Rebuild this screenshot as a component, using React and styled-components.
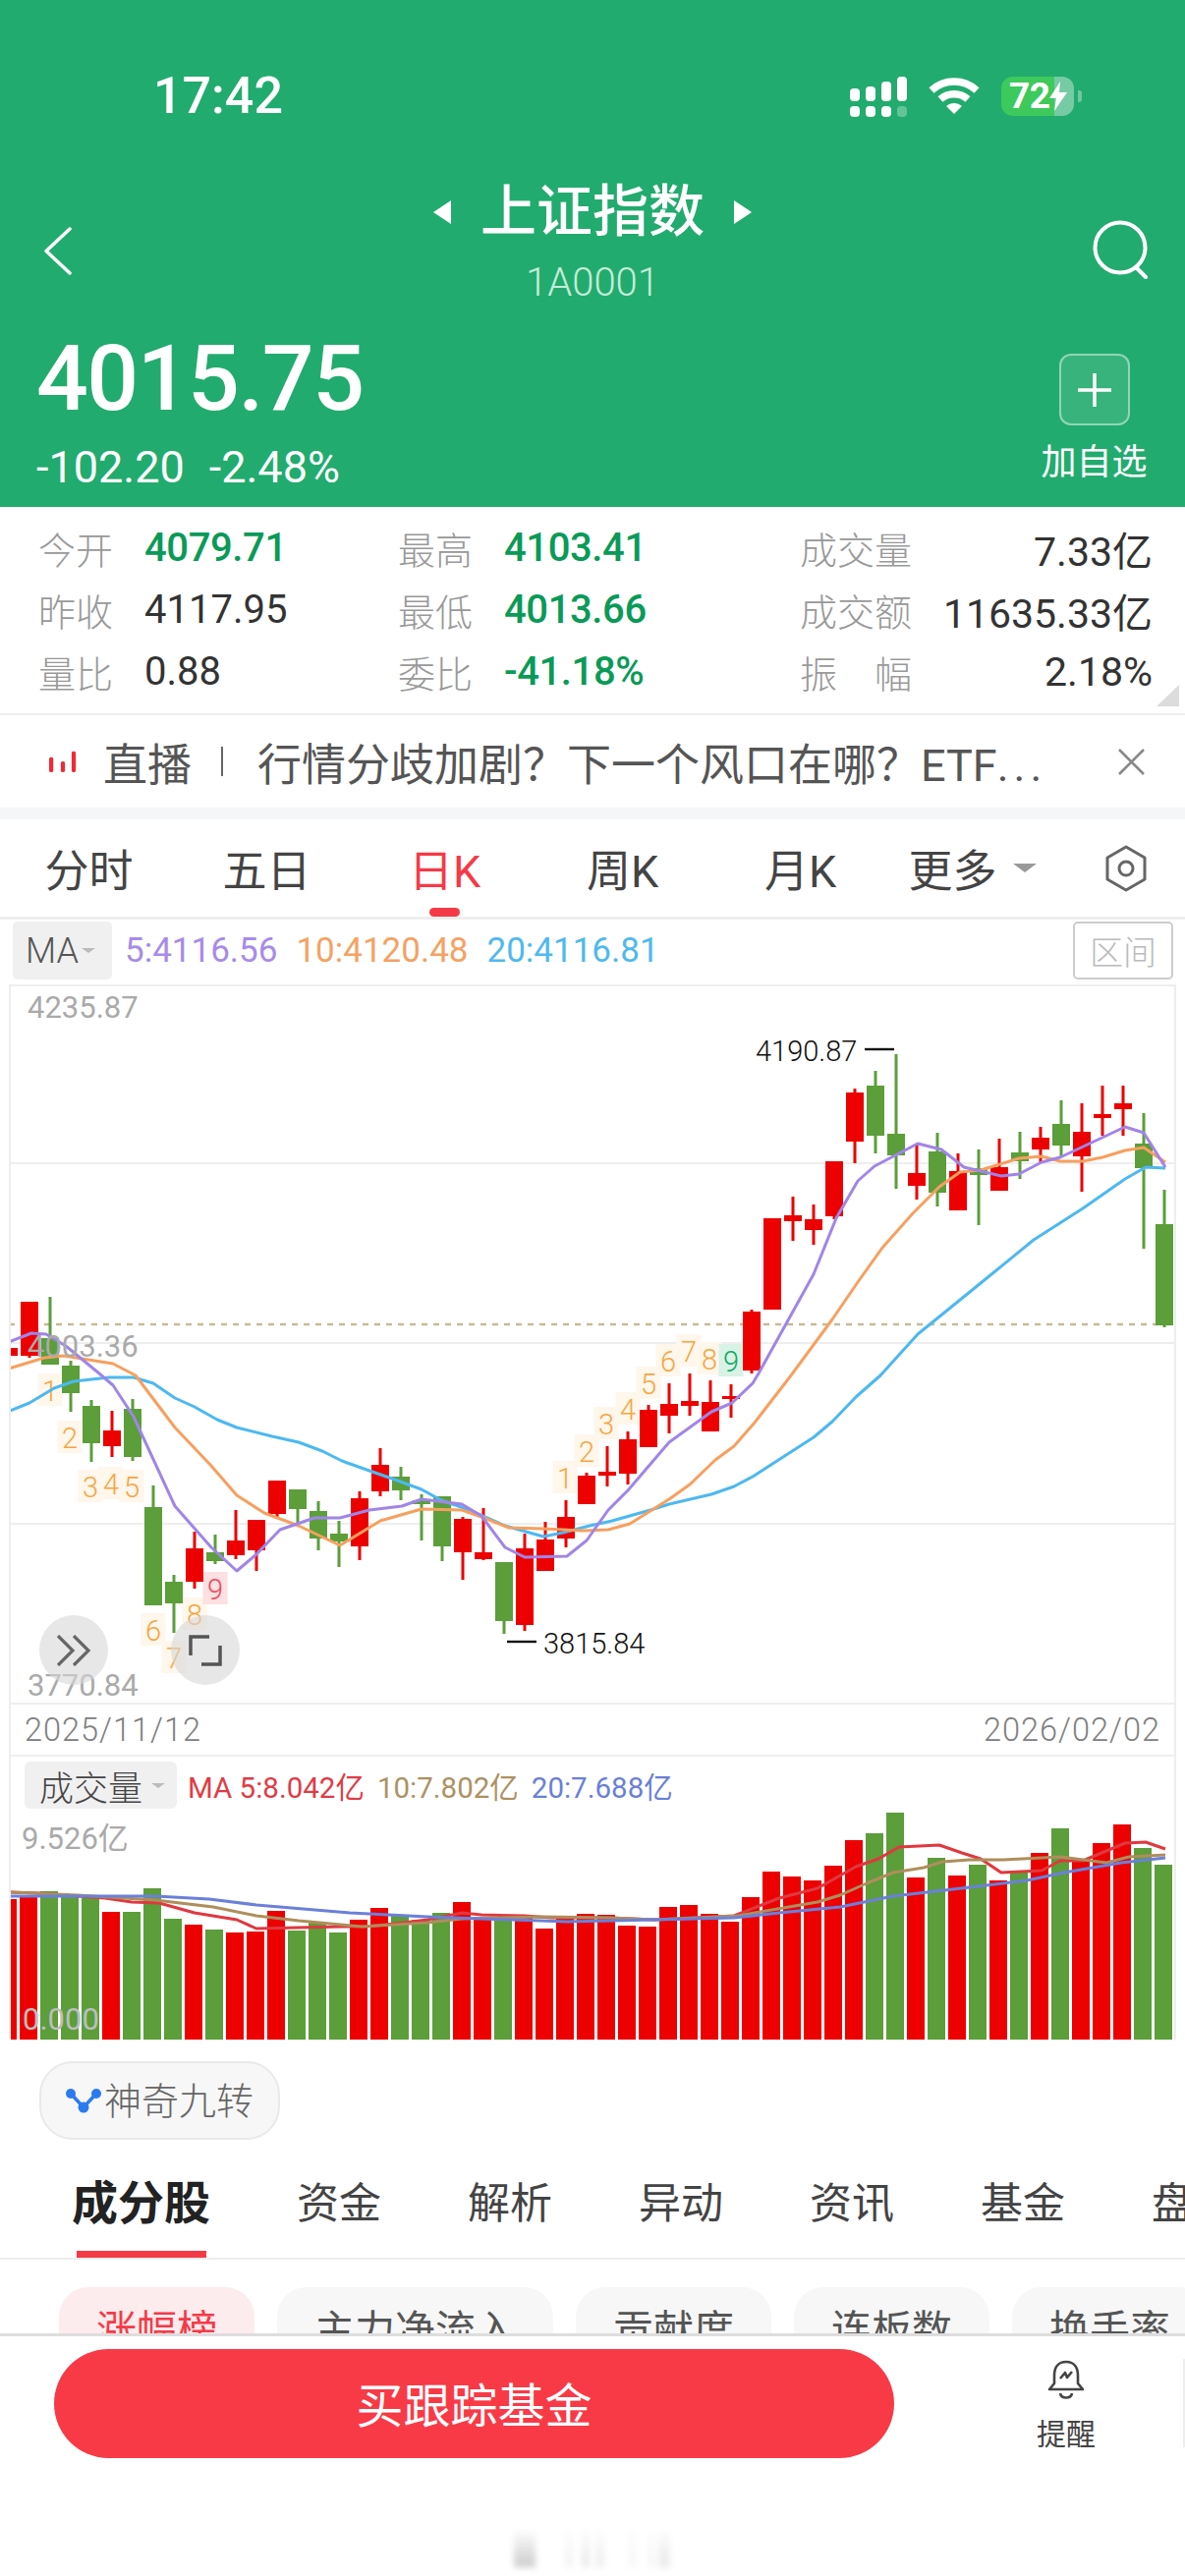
import React from 'react';
import styled, { createGlobalStyle } from 'styled-components';

const FONT = `Roboto, "Noto Sans CJK SC", sans-serif`;

const Global = createGlobalStyle`
  html, body { margin: 0; padding: 0; background: #fff; }
  * { box-sizing: border-box; }
`;

const Page = styled.div`
  width: 1206px; height: 2622px; display: flex; flex-direction: column; overflow: hidden;
  background: #fff; font-family: ${FONT}; color: #333; position: relative;
`;
const Main = styled.div`flex: 1; min-height: 0; overflow: hidden;`;

/* header */
const Header = styled.header`height: 516px; background: #22ab6e; color: #fff;`;
const StatusBar = styled.div`
  height: 130px; padding: 66px 113px 0 156px; display: flex; justify-content: space-between; align-items: center;
`;
const Clock = styled.div`font-size: 52px; font-weight: 500; line-height: 64px;`;
const StatusIcons = styled.div`display: flex; align-items: center; gap: 22px;`;
const Battery = styled.div`
  width: 74px; height: 40px; border-radius: 12px; display: flex; align-items: center; padding-left: 8px;
  background: linear-gradient(90deg, #3ec95c 0 54px, rgba(255,255,255,.38) 54px);
  font-size: 37px; font-weight: 700; letter-spacing: -.5px; position: relative; line-height: 40px;
  &::after { content: ''; position: absolute; right: -8px; top: 14px; width: 4px; height: 12px; border-radius: 0 3px 3px 0; background: rgba(255,255,255,.35); }
`;
const TitleRow = styled.div`
  height: 186px; padding: 50px 36px 0 36px; display: grid; grid-template-columns: 1fr auto 1fr;
`;
const BackIcon = styled.svg`margin: 51px 0 0 9px; display: block;`;
const SearchIcon = styled.svg`margin-top: 44px; display: block; justify-self: end;`;
const TitleBlock = styled.div`display: flex; flex-direction: column; align-items: center;`;
const TitleLine = styled.div`display: flex; align-items: center; gap: 30px; height: 72px;`;
const TitleText = styled.div`font-size: 57px; font-weight: 500; line-height: 72px;`;
const Tri = styled.span`
  width: 0; height: 0; border-style: solid; border-color: transparent;
  border-width: 12px ${p => p.$r ? 0 : '18px'} 12px ${p => p.$r ? '18px' : 0};
  ${p => p.$r ? 'border-left-color: #fff;' : 'border-right-color: #fff;'}
`;
const Code = styled.div`font-size: 40px; line-height: 40px; margin-top: 16px; color: #c6ecda; font-weight: 300;`;
const QuoteRow = styled.div`height: 200px; padding: 30px 39px 0 37px; display: flex; justify-content: space-between;`;
const Price = styled.div`font-size: 93px; font-weight: 500; line-height: 80px; letter-spacing: -1.5px;`;
const Change = styled.div`font-size: 45px; line-height: 50px; margin-top: 25px; display: flex; gap: 25px;`;
const AddColumn = styled.div`width: 107px; display: flex; flex-direction: column; align-items: center; padding-top: 14px;`;
const AddBtn = styled.div`
  width: 72px; height: 73px; border-radius: 12px; border: 2px solid rgba(255,255,255,.45); background: rgba(255,255,255,.1);
  display: flex; align-items: center; justify-content: center;
`;
const AddLabel = styled.div`font-size: 36px; line-height: 40px; margin-top: 18px; white-space: nowrap;`;

/* stats */
const Stats = styled.section`
  height: 212px; padding-top: 10px; border-bottom: 2px solid #eee; position: relative;
`;
const StatRow = styled.div`
  height: 63px; padding: 0 33px 0 39px; display: grid; align-items: center;
  grid-template-columns: 108px 258px 108px 301px 113px 1fr;
`;
const StatLabel = styled.div`font-size: 38px; color: #999; white-space: nowrap; font-weight: 300;`;
const StatValue = styled.div`
  font-size: ${p => p.$right ? 41 : 40}px; white-space: nowrap; font-weight: ${p => p.$green ? 500 : 400}; letter-spacing: ${p => p.$green ? '-.4px' : '0'};
  color: ${p => p.$green ? '#0a9a58' : '#333'}; text-align: ${p => p.$right ? 'right' : 'left'};
`;
const Corner = styled.div`
  position: absolute; right: 6px; bottom: 7px; width: 0; height: 0;
  border-left: 23px solid transparent; border-bottom: 22px solid #dcdcdc;
`;

/* live banner */
const Banner = styled.div`height: 94px; padding: 0 41px 0 50px; display: flex; align-items: center; color: #555; font-size: 45px; white-space: nowrap;`;
const BannerTag = styled.span`flex: none; margin-left: 27px;`;
const BannerSep = styled.span`flex: none; width: 2px; height: 30px; background: #666; margin: 0 35px 0 30px;`;
const BannerText = styled.span`flex: none; width: 826px; white-space: nowrap;`;
const BannerDots = styled.span`letter-spacing: 5px;`;
const CloseIcon = styled.svg`flex: none; margin-left: 50px; display: block;`;
const Band = styled.div`height: 12px; background: #f5f6f8;`;

/* period tabs */
const PeriodTabs = styled.nav`
  height: 102px; border-bottom: 3px solid #eee; display: grid; grid-template-columns: repeat(6, 181px) 1fr; align-items: center;
`;
const PeriodTab = styled.div`
  height: 99px; display: flex; align-items: center; justify-content: center; gap: 16px; font-size: 45px; position: relative;
  color: ${p => p.$active ? '#f53a47' : '#444'};
  ${p => p.$more && 'padding-right: 12px;'}
  ${p => p.$active && `&::after { content: ''; position: absolute; left: 75px; bottom: 0; width: 31px; height: 9px; border-radius: 5px; background: #f53a47; }`}
`;
const Caret = styled.span`
  width: 0; height: 0; border-style: solid; border-color: ${p => p.$c || '#999'} transparent transparent transparent;
  border-width: ${p => p.$s * .8}px ${p => p.$s}px 0 ${p => p.$s}px;
`;
const SettingIcon = styled.svg`display: block; margin-left: 38px;`;

/* MA row */
const MaRow = styled.div`height: 66px; padding: 2px 12px 0 13px; display: flex; align-items: flex-start;`;
const MaBtn = styled.div`
  width: 101px; height: 59px; border-radius: 5px; background: #f0f0f0; font-size: 36px; color: #555; font-weight: 300;
  display: flex; align-items: center; padding-left: 13px; gap: 3px;
`;
const MaValues = styled.div`height: 59px; flex: 1; display: flex; align-items: center; gap: 19px; margin-left: 13px; font-size: 35px;`;
const MaVal = styled.span`color: ${p => p.$c};`;
const RangeBtn = styled.div`
  width: 102px; height: 59px; border: 2px solid #ccc; border-radius: 5px; color: #bbb; font-size: 34px; font-weight: 300;
  display: flex; align-items: center; justify-content: center;
`;

/* chart frame */
const Frame = styled.div`margin: 0 9px; border: 2px solid #eee; border-bottom: 0; width: 1188px;`;
const PriceArea = styled.div`position: relative; height: 729px;`;
const ChartSvg = styled.svg`
  display: block;
  text { font-family: ${FONT}; }
`;
const CircleBtn = styled.div`
  position: absolute; top: 640px; left: ${p => p.$left}px; width: 70px; height: 71px; border-radius: 50%;
  background: rgba(215,215,215,.6); display: flex; align-items: center; justify-content: center;
`;
const DateRow = styled.div`
  height: 55px; border-top: 2px solid #eee; border-bottom: 2px solid #eee; padding: 0 14px 0 14px; display: flex; align-items: center; justify-content: space-between;
  font-size: 32.5px; letter-spacing: 1px; color: #808080; font-weight: 300;
`;
const VolHead = styled.div`height: 53px; padding: 5px 0 0 14px; display: flex; align-items: flex-start;`;
const VolBtn = styled.div`
  width: 155px; height: 48px; border-radius: 6px; background: #f0f0f0; font-size: 35px; color: #444;
  display: flex; align-items: center; padding-left: 15px; gap: 9px; font-weight: 300;
`;
const VolMa = styled.div`height: 48px; display: flex; align-items: center; gap: 13px; margin-left: 11px; font-size: 29.5px;`;

/* indicator pill */
const PillRow = styled.div`padding: 22px 0 0 40px;`;
const Pill = styled.div`
  width: 245px; height: 80px; border-radius: 34px; background: #f7f7f7; border: 2px solid #e9e9e9;
  display: flex; align-items: center; padding: 0 0 5px 25px; gap: 3px; font-size: 38px; color: #666; font-weight: 300;
`;
const PillIcon = styled.svg`display: block; margin-top: 5px; flex: none;`;
const SectionTabs = styled.nav`
  height: 122px; padding: 10px 0 0 73px; border-bottom: 2px solid #eee; display: flex; align-items: center; gap: 88px; overflow: hidden; white-space: nowrap;
`;
const SectionTab = styled.div`
  font-size: ${p => p.$active ? 47 : 43}px; font-weight: ${p => p.$active ? 700 : 400}; color: ${p => p.$active ? '#222' : '#444'};
  position: relative; flex: none; line-height: 60px;
  ${p => p.$active && `&::after { content: ''; position: absolute; left: 5px; right: 4px; top: 78px; height: 8px; background: #f53a47; }`}
`;
const ChipRow = styled.div`padding: 28px 0 0 60px; display: flex; gap: 23px; white-space: nowrap;`;
const Chip = styled.div`
  flex: none; height: 80px; padding: 0 38px; border-radius: 30px; font-size: 41px; display: flex; align-items: center;
  background: ${p => p.$active ? '#fdecee' : '#f7f7f7'}; color: ${p => p.$active ? '#f53a47' : '#555'};
`;

/* footer */
const Footer = styled.footer`
  flex: none; height: 247px; border-top: 3px solid #ddd; background: #fff; padding: 13px 0 0 55px; display: flex; align-items: flex-start; position: relative;
`;
const BuyBtn = styled.div`
  width: 855px; height: 111px; border-radius: 56px; background: #f83a47; color: #fff; font-size: 48px;
  display: flex; align-items: center; justify-content: center; flex: none; padding-bottom: 3px;
`;
const Remind = styled.div`
  width: 120px; margin: 11px 0 0 115px; display: flex; flex-direction: column; align-items: center; color: #444; font-size: 30px; gap: 20px; line-height: 32px;
`;
const FootDivider = styled.div`width: 2px; height: 90px; background: #eee; margin: 10px 0 0 59px;`;
const Watermark = styled.div`
  position: absolute; left: 523px; top: 198px; display: flex; filter: blur(3px);
`;
const WmBar = styled.div`
  width: ${p => p.$w}px; height: 37px; margin-right: ${p => p.$m}px;
  background: linear-gradient(180deg, rgba(0,0,0,.01), rgba(0,0,0,${p => p.$a}));
`;

/* data */
const X = k => 30 + 21 * k;
const R = 'r', G = 'g';
const candles = [
  [-1,R,1372,1372,1380,1380],[0,R,1325,1325,1380,1382],[1,G,1320,1362,1389,1389],[2,G,1385,1390,1418,1437],
  [3,G,1425,1431,1469,1488],[4,R,1436,1456,1472,1483],[5,G,1424,1434,1483,1487],[6,G,1512,1534,1634,1634],
  [7,G,1603,1610,1632,1662],[8,R,1559,1576,1610,1617],[9,G,1562,1580,1589,1592],[10,R,1537,1568,1583,1587],
  [11,R,1547,1547,1578,1599],[12,R,1507,1507,1541,1544],[13,G,1516,1516,1536,1550],[14,G,1528,1538,1566,1578],
  [15,G,1548,1561,1569,1595],[16,R,1518,1525,1574,1588],[17,R,1474,1491,1518,1523],[18,G,1493,1503,1517,1527],
  [19,G,1521,1527,1531,1568],[20,G,1523,1523,1574,1589],[21,R,1544,1546,1580,1608],[22,R,1535,1580,1587,1588],
  [23,G,1590,1590,1650,1663],[24,R,1561,1576,1654,1660],[25,R,1549,1567,1599,1599],[26,R,1527,1544,1566,1575],
  [27,R,1499,1502,1531,1531],[28,R,1472,1498,1502,1513],[29,R,1457,1465,1500,1511],[30,R,1430,1435,1473,1473],
  [31,R,1408,1429,1441,1459],[32,R,1398,1426,1431,1441],[33,R,1405,1427,1457,1457],[34,R,1409,1421,1424,1443],
  [35,R,1333,1335,1395,1398],[36,R,1240,1240,1333,1333],[37,R,1218,1237,1243,1263],[38,R,1226,1241,1252,1267],
  [39,R,1182,1182,1238,1241],[40,R,1108,1112,1162,1184],[41,G,1090,1105,1156,1174],[42,G,1073,1154,1176,1210],
  [43,R,1165,1194,1207,1221],[44,G,1153,1172,1214,1228],[45,R,1174,1192,1232,1232],[46,G,1170,1189,1196,1247],
  [47,R,1159,1188,1212,1212],[48,G,1152,1173,1182,1200],[49,R,1147,1158,1170,1183],[50,G,1120,1144,1166,1178],
  [51,R,1123,1152,1177,1213],[52,R,1105,1134,1138,1156],[53,R,1105,1123,1129,1156],[54,G,1133,1164,1189,1271],
  [55,G,1211,1246,1349,1351],
];
const pts = a => a.map(p => p.join(',')).join(' ');
const ma5 = [[9,1366],[32,1357],[47,1358],[67,1370],[101,1398],[115,1410],[136,1442],[178,1533],[215,1575],[241,1599],[261,1582],[285,1557],[320,1545],[346,1545],[376,1537],[409,1533],[429,1526],[470,1531],[490,1543],[514,1575],[534,1585],[577,1584],[597,1568],[619,1537],[639,1517],[681,1468],[724,1437],[745,1428],[766,1408],[772,1398],[828,1297],[851,1240],[873,1202],[890,1187],[934,1164],[958,1170],[981,1188],[1019,1197],[1037,1195],[1060,1183],[1079,1178],[1145,1147],[1164,1153],[1186,1188]];
const ma10 = [[9,1393],[45,1382],[65,1380],[115,1388],[138,1400],[178,1453],[215,1492],[241,1522],[269,1540],[304,1553],[346,1573],[387,1548],[429,1536],[470,1537],[490,1544],[518,1555],[553,1556],[593,1558],[619,1557],[641,1551],[681,1526],[702,1511],[728,1486],[747,1472],[768,1448],[805,1400],[847,1343],[873,1305],[898,1270],[929,1235],[956,1208],[977,1193],[998,1191],[1037,1179],[1060,1177],[1079,1182],[1102,1182],[1122,1178],[1145,1171],[1164,1168],[1186,1183]];
const ma20 = [[10,1436],[30,1428],[55,1413],[75,1406],[111,1402],[136,1402],[156,1408],[178,1423],[198,1432],[221,1445],[241,1453],[277,1462],[304,1468],[328,1477],[348,1487],[376,1497],[399,1505],[429,1516],[449,1527],[478,1537],[514,1553],[553,1564],[573,1560],[600,1553],[623,1548],[662,1537],[681,1531],[724,1521],[747,1513],[766,1503],[828,1463],[847,1447],[871,1422],[896,1400],[934,1358],[987,1315],[1052,1262],[1102,1230],[1145,1200],[1166,1188],[1186,1189]];
const nine = [
  [1,51,1415],[2,71,1463],[3,92,1513],[4,113,1510],[5,134,1513],[6,156,1659],[7,177,1687],[8,198,1643],[9,219,1617,'red'],
  [1,575,1504],[2,597,1477],[3,617,1449],[4,639,1434],[5,660,1408],[6,680,1385],[7,701,1375],[8,722,1383],[9,744,1385,'green'],
];
const tile = { red: ['#fde0e2', '#ef4a5c'], green: ['#d8f2e6', '#14a868'], def: ['#fff6ec', '#f5a63e'] };
const volG = new Set([1,2,3,5,6,7,9,13,14,15,18,19,20,23,41,42,44,46,48,50,54,55]);
const volTops = [1934,1932,1926,1932,1933,1947,1947,1923,1954,1960,1965,1968,1967,1946,1966,1958,1968,1955,1943,1951,1955,1948,1937,1953,1953,1953,1964,1953,1949,1950,1961,1962,1942,1940,1949,1957,1932,1906,1911,1915,1900,1874,1867,1846,1912,1892,1910,1899,1915,1907,1887,1862,1893,1877,1858,1882,1899];
const vRed = [[9,1927],[40,1928],[79,1931],[107,1933],[134,1937],[162,1938],[198,1948],[241,1955],[261,1964],[304,1963],[348,1962],[372,1962],[411,1958],[435,1955],[470,1948],[490,1950],[534,1951],[561,1953],[620,1953],[666,1955],[747,1951],[793,1933],[832,1923],[871,1901],[894,1893],[915,1881],[956,1879],[979,1887],[998,1893],[1019,1907],[1060,1905],[1079,1895],[1102,1895],[1145,1877],[1166,1876],[1186,1883]];
const vTan = [[9,1927],[79,1930],[158,1935],[217,1942],[261,1951],[304,1956],[368,1962],[435,1958],[470,1954],[553,1952],[620,1953],[666,1955],[751,1951],[832,1937],[855,1930],[882,1918],[909,1907],[940,1902],[959,1896],[987,1894],[1021,1894],[1079,1891],[1126,1897],[1149,1891],[1186,1889]];
const vBlue = [[9,1931],[158,1931],[213,1934],[261,1940],[356,1948],[435,1952],[577,1957],[666,1955],[747,1953],[793,1948],[855,1942],[909,1931],[987,1922],[1045,1915],[1083,1907],[1141,1897],[1186,1892]];

const C = { r: '#ec0000', g: '#5b9e3a' };

function PriceChart() {
  return (
    <ChartSvg width="1184" height="729" viewBox="11 1004 1184 729">
      {[1184, 1367, 1551].map(y => <line key={y} x1="11" x2="1195" y1={y} y2={y} stroke="#eee" strokeWidth="2" />)}
      <line x1="9" x2="1195" y1="1348" y2="1348" stroke="#c6ba98" strokeWidth="2.5" strokeDasharray="6 6" />
      {nine.map(([n, x, y, t], i) => {
        const [bg, fg] = tile[t || 'def'];
        return (
          <g key={i}>
            <rect x={x - 12.5} y={y - 17} width="25" height="33" fill={bg} />
            <text x={x} y={y + 11} textAnchor="middle" fontSize="29" fontWeight="300" fill={fg}>{n}</text>
          </g>
        );
      })}
      {candles.map(([k, c, wt, bt, bb, wb]) => (
        <g key={k} fill={C[c]}>
          <rect x={X(k) - 1.5} y={wt} width="3" height={wb - wt} />
          <rect x={X(k) - 9} y={bt} width="18" height={bb - bt} />
        </g>
      ))}
      <g fill="none" strokeWidth="3" strokeLinejoin="round">
        <polyline points={pts(ma20)} stroke="#4db8f0" />
        <polyline points={pts(ma10)} stroke="#f6a05f" />
        <polyline points={pts(ma5)} stroke="#a085e8" />
      </g>
      <g fontSize="31" fill="#aaa">
        <text x="28" y="1036">4235.87</text>
        <text x="28" y="1381">4003.36</text>
        <text x="28" y="1726">3770.84</text>
      </g>
      <g fontSize="29" fill="#111" fontWeight="300">
        <text x="769" y="1080">4190.87</text>
        <text x="553" y="1683">3815.84</text>
      </g>
      <line x1="880" x2="910" y1="1068" y2="1068" stroke="#111" strokeWidth="2.4" />
      <line x1="516" x2="546" y1="1671" y2="1671" stroke="#111" strokeWidth="2.4" />
    </ChartSvg>
  );
}

function VolumeChart() {
  return (
    <ChartSvg width="1184" height="235" viewBox="11 1842 1184 235">
      {volTops.map((t, i) => {
        const k = i - 1;
        return <rect key={k} x={29 + 21 * k - 9} y={t} width="18" height={2077 - t} fill={volG.has(k) ? C.g : C.r} />;
      })}
      <g fill="none" strokeWidth="3" strokeLinejoin="round">
        <polyline points={pts(vRed)} stroke="#e0383f" />
        <polyline points={pts(vTan)} stroke="#ae8e5c" />
        <polyline points={pts(vBlue)} stroke="#6a80da" />
      </g>
      <text x="22" y="1883" fontSize="31" fill="#aaa">9.526亿</text>
      <text x="23" y="2067" fontSize="31" fill="#bdbdbd">0.000</text>
    </ChartSvg>
  );
}

const SignalIcon = () => (
  <svg width="58" height="41" viewBox="865 77 58 41" fill="#fff">
    <rect x="865" y="89" width="10" height="13" rx="4" /><rect x="881" y="87" width="10" height="15" rx="4" />
    <rect x="897" y="82" width="10" height="20" rx="4" /><rect x="913" y="77" width="10" height="25" rx="4" />
    <rect x="865" y="107" width="10" height="11" rx="4" /><rect x="881" y="107" width="10" height="11" rx="4" />
    <rect x="897" y="107" width="10" height="11" rx="4" /><rect x="913" y="107" width="10" height="11" rx="4" opacity=".3" />
  </svg>
);
const WifiIcon = () => (
  <svg width="52" height="38" viewBox="0 0 52 38" fill="none" stroke="#fff" strokeWidth="7.5">
    <path d="M3 13 C16 1 36 1 49 13" />
    <path d="M12 22 C20 15 32 15 40 22" />
    <path d="M18 29 L26 37 L34 29 C29 25 23 25 18 29 Z" fill="#fff" stroke="none" />
  </svg>
);

export default function App() {
  return (
    <Page>
      <Global />
      <Main>
        <Header>
          <StatusBar>
            <Clock>17:42</Clock>
            <StatusIcons>
              <SignalIcon />
              <WifiIcon />
              <Battery>
                72
                <svg width="18" height="30" viewBox="0 0 18 30" fill="#fff"><path d="M11 0 L0 17 H7 L5 30 L18 11 H10 Z" /></svg>
              </Battery>
            </StatusIcons>
          </StatusBar>
          <TitleRow>
            <BackIcon width="28" height="49" viewBox="0 0 28 49" fill="none" stroke="#fff" strokeWidth="3.5" strokeLinecap="round" strokeLinejoin="round">
              <path d="M26 2 L2 24.5 L26 47" />
            </BackIcon>
            <TitleBlock>
              <TitleLine>
                <Tri />
                <TitleText>上证指数</TitleText>
                <Tri $r />
              </TitleLine>
              <Code>1A0001</Code>
            </TitleBlock>
            <SearchIcon width="58" height="60" viewBox="0 0 58 60" fill="none" stroke="#fff" strokeWidth="4" strokeLinecap="round">
              <circle cx="28" cy="28" r="25.5" />
              <path d="M44 48 L54 58" />
            </SearchIcon>
          </TitleRow>
          <QuoteRow>
            <div>
              <Price>4015.75</Price>
              <Change><span>-102.20</span><span>-2.48%</span></Change>
            </div>
            <AddColumn>
              <AddBtn>
                <svg width="36" height="36" viewBox="0 0 36 36" stroke="#fff" strokeWidth="3.5"><path d="M18 1 V35 M1 18 H35" /></svg>
              </AddBtn>
              <AddLabel>加自选</AddLabel>
            </AddColumn>
          </QuoteRow>
        </Header>

        <Stats>
          <StatRow>
            <StatLabel>今开</StatLabel><StatValue $green>4079.71</StatValue>
            <StatLabel>最高</StatLabel><StatValue $green>4103.41</StatValue>
            <StatLabel>成交量</StatLabel><StatValue $right>7.33亿</StatValue>
          </StatRow>
          <StatRow>
            <StatLabel>昨收</StatLabel><StatValue>4117.95</StatValue>
            <StatLabel>最低</StatLabel><StatValue $green>4013.66</StatValue>
            <StatLabel>成交额</StatLabel><StatValue $right>11635.33亿</StatValue>
          </StatRow>
          <StatRow>
            <StatLabel>量比</StatLabel><StatValue>0.88</StatValue>
            <StatLabel>委比</StatLabel><StatValue $green>-41.18%</StatValue>
            <StatLabel>振　幅</StatLabel><StatValue $right>2.18%</StatValue>
          </StatRow>
          <Corner />
        </Stats>

        <Banner>
          <svg width="33" height="26" viewBox="0 0 33 26" fill="#ee2a38">
            <rect x="0" y="8" width="5" height="18" rx="2" /><rect x="14" y="13" width="5" height="13" rx="2" /><rect x="27" y="1" width="5" height="25" rx="2" />
          </svg>
          <BannerTag>直播</BannerTag>
          <BannerSep />
          <BannerText>行情分歧加剧？下一个风口在哪？ETF<BannerDots>...</BannerDots></BannerText>
          <CloseIcon width="27" height="27" viewBox="0 0 27 27" stroke="#888" strokeWidth="2.5"><path d="M1 1 L26 26 M26 1 L1 26" /></CloseIcon>
        </Banner>
        <Band />

        <PeriodTabs>
          <PeriodTab>分时</PeriodTab>
          <PeriodTab>五日</PeriodTab>
          <PeriodTab $active>日K</PeriodTab>
          <PeriodTab>周K</PeriodTab>
          <PeriodTab>月K</PeriodTab>
          <PeriodTab $more>更多<Caret $s={12} /></PeriodTab>
          <SettingIcon width="44" height="48" viewBox="0 0 44 48" fill="none" stroke="#666" strokeWidth="3" strokeLinejoin="round">
            <path d="M22 2 L41 13 V35 L22 46 L3 35 V13 Z" />
            <circle cx="22" cy="24" r="7" />
          </SettingIcon>
        </PeriodTabs>

        <MaRow>
          <MaBtn>MA<Caret $s={7} $c="#bbb" /></MaBtn>
          <MaValues>
            <MaVal $c="#a78be8">5:4116.56</MaVal>
            <MaVal $c="#f5a263">10:4120.48</MaVal>
            <MaVal $c="#4fb9ef">20:4116.81</MaVal>
          </MaValues>
          <RangeBtn>区间</RangeBtn>
        </MaRow>

        <Frame>
          <PriceArea>
            <PriceChart />
            <CircleBtn $left={29}>
              <svg width="36" height="32" viewBox="0 0 36 32" fill="none" stroke="#666" strokeWidth="3.2"><path d="M2 1 L17 16 L2 31 M18 1 L33 16 L18 31" /></svg>
            </CircleBtn>
            <CircleBtn $left={163}>
              <svg width="34" height="32" viewBox="0 0 34 32" fill="none" stroke="#555" strokeWidth="3.5"><path d="M21 2 H2 V21 M13 30 H32 V11" /></svg>
            </CircleBtn>
          </PriceArea>
          <DateRow><span>2025/11/12</span><span>2026/02/02</span></DateRow>
          <VolHead>
            <VolBtn>成交量<Caret $s={7} $c="#bbb" /></VolBtn>
            <VolMa>
              <MaVal $c="#e03c46">MA 5:8.042亿</MaVal>
              <MaVal $c="#ad9163">10:7.802亿</MaVal>
              <MaVal $c="#6a7fd8">20:7.688亿</MaVal>
            </VolMa>
          </VolHead>
          <VolumeChart />
        </Frame>

        <PillRow>
          <Pill>
            <PillIcon width="36" height="26" viewBox="0 0 36 26" fill="none" stroke="#2b7bf0" strokeWidth="3.5">
              <path d="M5 6 L18 20 L31 6" />
              <g fill="#2b7bf0" stroke="none"><circle cx="5" cy="6" r="5" /><circle cx="18" cy="20" r="5.5" /><circle cx="31" cy="6" r="5" /></g>
            </PillIcon>
            神奇九转
          </Pill>
        </PillRow>

        <SectionTabs>
          <SectionTab $active>成分股</SectionTab>
          <SectionTab>资金</SectionTab>
          <SectionTab>解析</SectionTab>
          <SectionTab>异动</SectionTab>
          <SectionTab>资讯</SectionTab>
          <SectionTab>基金</SectionTab>
          <SectionTab>盘口</SectionTab>
        </SectionTabs>

        <ChipRow>
          <Chip $active>涨幅榜</Chip>
          <Chip>主力净流入</Chip>
          <Chip>贡献度</Chip>
          <Chip>连板数</Chip>
          <Chip>换手率</Chip>
        </ChipRow>
      </Main>

      <Footer>
        <BuyBtn>买跟踪基金</BuyBtn>
        <Remind>
          <svg width="38" height="40" viewBox="0 0 38 40" fill="none" stroke="#444" strokeWidth="2.6" strokeLinejoin="round">
            <path d="M19 2 C10 2 7 9 7 16 V24 L2 30 H36 L31 24 V16 C31 9 28 2 19 2 Z" />
            <path d="M13 34 C14 40 24 40 25 34" />
            <path d="M13 19 L18 13 L20 18 L25 12" />
          </svg>
          提醒
        </Remind>
        <FootDivider />
        <Watermark>
          <WmBar $w={22} $m={30} $a={.2} />
          <WmBar $w={8} $m={9} $a={.05} />
          <WmBar $w={8} $m={6} $a={.09} />
          <WmBar $w={9} $m={25} $a={.07} />
          <WmBar $w={7} $m={13} $a={.04} />
          <WmBar $w={5} $m={5} $a={.05} />
          <WmBar $w={12} $m={0} $a={.09} />
        </Watermark>
      </Footer>
    </Page>
  );
}
